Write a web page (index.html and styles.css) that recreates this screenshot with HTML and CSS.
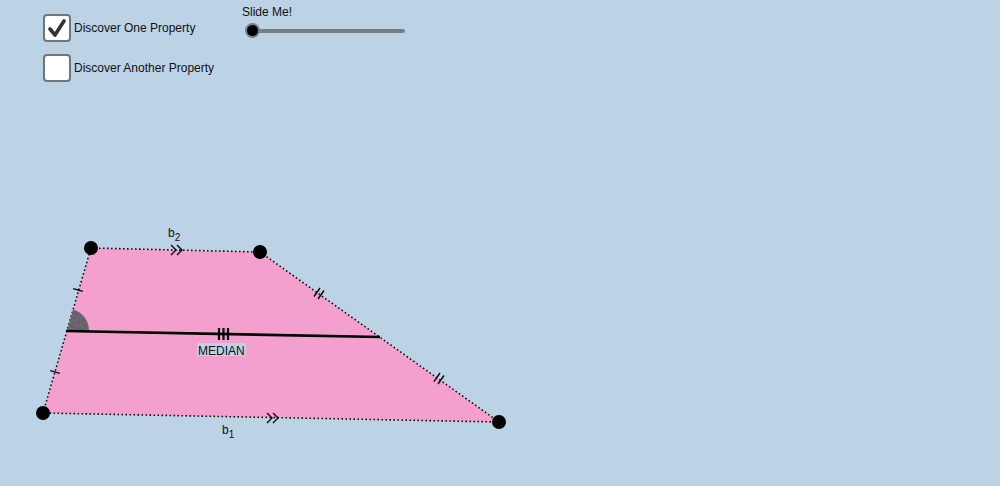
FILE: index.html
```html
<!DOCTYPE html>
<html>
<head>
<meta charset="utf-8">
<link rel="stylesheet" href="styles.css">
</head>
<body>
<div class="stage">
  <svg class="canvas" width="1000" height="486" viewBox="0 0 1000 486">
    <polygon points="91,248 260,252 499,422 43,413" fill="#f4a0ce"/>
    <g stroke="#111" stroke-width="1.6" stroke-dasharray="1.6 2.4" fill="none">
      <line x1="91" y1="248" x2="260" y2="252"/>
      <line x1="260" y1="252" x2="499" y2="422"/>
      <line x1="499" y1="422" x2="43" y2="413"/>
      <line x1="43" y1="413" x2="91" y2="248"/>
    </g>
    <path d="M67,330.5 L89,331 A22,22 0 0 0 73.1,309.4 Z" fill="#6c6570"/>
    <g fill="#3a3540">
      <circle cx="74" cy="318" r="0.6"/><circle cx="79" cy="322" r="0.6"/><circle cx="84" cy="326" r="0.6"/>
      <circle cx="77" cy="314" r="0.6"/><circle cx="72" cy="326" r="0.6"/><circle cx="80" cy="328" r="0.6"/>
      <circle cx="83" cy="320" r="0.6"/><circle cx="75" cy="323" r="0.6"/>
    </g>
    <line x1="66" y1="331" x2="380" y2="337" stroke="#000" stroke-width="2.6"/>
    <g stroke="#000" stroke-width="1.4" fill="none">
      <line x1="73.2" y1="288.6" x2="82.8" y2="291.4"/>
      <line x1="50.2" y1="370.6" x2="59.8" y2="373.4"/>
      <line x1="318" y1="299" x2="324" y2="290.5"/>
      <line x1="314" y1="296.5" x2="320" y2="288"/>
      <line x1="438" y1="384" x2="444" y2="375.5"/>
      <line x1="434" y1="381.5" x2="440" y2="373"/>
      <path d="M171,245 L176,250 L171,255 M177,245 L182,250 L177,255"/>
      <path d="M267,413 L272,418 L267,423 M273,413 L278,418 L273,423"/>
    </g>
    <g stroke="#000" stroke-width="2.2">
      <line x1="219" y1="328" x2="219" y2="340"/>
      <line x1="223.5" y1="328" x2="223.5" y2="340"/>
      <line x1="228" y1="328" x2="228" y2="340"/>
    </g>
    <g fill="#000">
      <circle cx="91" cy="248" r="7"/>
      <circle cx="260" cy="252" r="7"/>
      <circle cx="499" cy="422" r="7"/>
      <circle cx="43" cy="413" r="7"/>
    </g>
    <rect x="197" y="343" width="49" height="13" fill="#bcd3e6"/>
    <text x="198" y="354.5" class="lbl">MEDIAN</text>
    <text x="168" y="237" class="lbl">b<tspan dy="4" class="sub">2</tspan></text>
    <text x="222" y="434" class="lbl">b<tspan dy="4" class="sub">1</tspan></text>
  </svg>

  <div class="controls">
    <div class="checks">
      <label class="row">
        <span class="box">
          <svg width="22" height="22" viewBox="0 0 22 22"><path d="M4,12 L9,18 L18,4" stroke="#333" stroke-width="3.6" fill="none" stroke-linecap="round" stroke-linejoin="round"/></svg>
        </span>
        <span class="text">Discover One Property</span>
      </label>
      <label class="row">
        <span class="box"></span>
        <span class="text">Discover Another Property</span>
      </label>
    </div>
    <div class="slider">
      <div class="slider-caption">Slide Me!</div>
      <div class="track"><span class="knob"></span></div>
    </div>
  </div>
</div>
</body>
</html>
```

FILE: styles.css
```css
html, body {
  margin: 0;
  padding: 0;
  background: #bcd3e6;
  width: 1000px;
  height: 486px;
  overflow: hidden;
  font-family: "Liberation Sans", Arial, sans-serif;
}
.stage {
  display: grid;
  width: 1000px;
  height: 486px;
}
.canvas, .controls {
  grid-area: 1 / 1;
}
.canvas {
  display: block;
}
.lbl {
  font-family: "Liberation Sans", Arial, sans-serif;
  font-size: 12px;
  fill: #111;
}
.sub {
  font-size: 10px;
}
.controls {
  display: flex;
  align-items: flex-start;
  padding-left: 43px;
  align-self: start;
}
.checks {
  display: flex;
  flex-direction: column;
  gap: 12px;
  padding-top: 14px;
  width: 199px;
}
.row {
  display: flex;
  align-items: center;
  gap: 3px;
}
.box {
  width: 24px;
  height: 24px;
  border: 2px solid #6e757d;
  border-radius: 4px;
  background: #fff;
  display: flex;
  align-items: center;
  justify-content: center;
}
.text {
  font-size: 12px;
  color: #111;
  white-space: nowrap;
}
.slider {
  display: flex;
  flex-direction: column;
  padding-top: 5px;
}
.slider-caption {
  font-size: 12px;
  color: #111;
  line-height: 14px;
}
.track {
  position: relative;
  margin-top: 10px;
  margin-left: 11px;
  width: 152px;
  height: 4px;
  border-radius: 2px;
  background: #747f88;
}
.knob {
  position: absolute;
  left: -8px;
  top: -6px;
  width: 11px;
  height: 11px;
  border-radius: 50%;
  background: #000;
  border: 2.5px solid #7a7f86;
}
```
